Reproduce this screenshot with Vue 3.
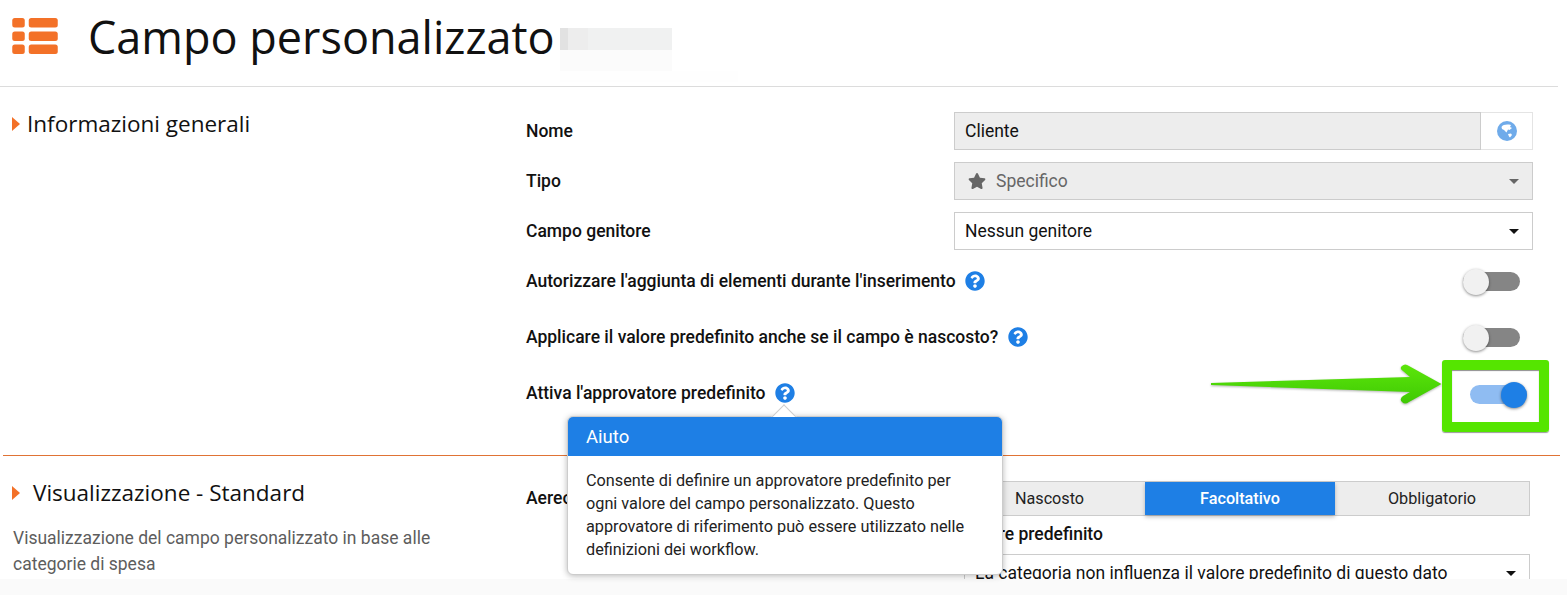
<script setup>
const qPath = "M504 256c0 136.997-111.043 248-248 248S8 392.997 8 256C8 119.083 119.043 8 256 8s248 111.083 248 248zM262.655 90c-54.497 0-89.255 22.957-116.549 63.758-3.536 5.286-2.353 12.415 2.715 16.258l34.699 26.31c5.205 3.947 12.621 3.008 16.665-2.122 17.864-22.658 30.113-35.797 57.303-35.797 20.429 0 45.698 13.148 45.698 32.958 0 14.976-12.363 22.667-32.534 33.976C247.128 238.528 216 254.941 216 296v4c0 6.627 5.373 12 12 12h56c6.627 0 12-5.373 12-12v-1.333c0-28.462 83.186-29.647 83.186-106.667 0-58.002-60.165-102-116.531-102zM256 338c-25.365 0-46 20.635-46 46 0 25.364 20.635 46 46 46s46-20.636 46-46c0-25.365-20.635-46-46-46z";
const starPath = "M259.3 17.8L194 150.2 47.9 171.5c-26.2 3.8-36.7 36.1-17.7 54.6l105.7 103-25 145.5c-4.5 26.3 23.2 46 46.4 33.7L288 439.6l130.7 68.7c23.2 12.2 50.9-7.4 46.4-33.7l-25-145.5 105.7-103c19-18.5 8.5-50.8-17.7-54.6L382 150.2 316.7 17.8c-11.7-23.6-45.6-23.9-57.4 0z";
const toggleRows = [
  { label: "Autorizzare l'aggiunta di elementi durante l'inserimento" },
  { label: "Applicare il valore predefinito anche se il campo è nascosto?" },
];
</script>

<template>
  <div class="page">
    <header class="head">
      <svg class="list-icon" viewBox="0 0 45.5 36" width="46" height="36">
        <g fill="#f37128">
          <rect x="0" y="0" width="12.5" height="9.5" rx="2.5" />
          <rect x="16.5" y="0" width="29" height="9.5" rx="2.5" />
          <rect x="0" y="13.5" width="12.5" height="9.5" rx="2.5" />
          <rect x="16.5" y="13.5" width="29" height="9.5" rx="2.5" />
          <rect x="0" y="26.5" width="12.5" height="9.5" rx="2.5" />
          <rect x="16.5" y="26.5" width="29" height="9.5" rx="2.5" />
        </g>
      </svg>
      <h1 class="title">Campo personalizzato</h1>
      <svg class="smudge" viewBox="0 0 178 54" width="178" height="54">
        <rect x="0" y="0" width="8" height="22" fill="#e2e2e2" />
        <rect x="8" y="0" width="20" height="22" fill="#ededed" />
        <rect x="28" y="0" width="84" height="22" fill="#f0f1f1" />
        <rect x="0" y="22" width="112" height="21" fill="#fbfbfb" />
        <rect x="0" y="43" width="178" height="11" fill="#fefefe" />
      </svg>
    </header>

    <section class="section first">
      <div class="side">
        <h2 class="sec-title small"><span class="tri"></span>Informazioni generali</h2>
      </div>
      <div class="form">
        <div class="row">
          <label class="lab">Nome</label>
          <div class="ctrl">
            <div class="field grey">Cliente</div>
            <div class="addon">
              <svg viewBox="0 0 20 20" width="20" height="20">
                <circle cx="10" cy="10" r="10" fill="#6fabea" />
                <path d="M4.5 6C6 3.5 10 3 14 4L13 6L15 7L12.5 9L11 8.5L9.5 11.5L7 9L5 8Z" fill="#fff" />
                <path d="M11 13L14 12.5L15 14L13 16.5L12 15.5Z" fill="#fff" />
              </svg>
            </div>
          </div>
        </div>
        <div class="row">
          <label class="lab">Tipo</label>
          <div class="ctrl">
            <div class="field grey select muted">
              <svg class="star" viewBox="0 0 576 512" width="18" height="16"><path :d="starPath" fill="#666" /></svg>
              Specifico
              <span class="caret soft"></span>
            </div>
          </div>
        </div>
        <div class="row tight">
          <label class="lab">Campo genitore</label>
          <div class="ctrl">
            <div class="field select">Nessun genitore<span class="caret"></span></div>
          </div>
        </div>
        <div v-for="t in toggleRows" :key="t.label" class="trow">
          <label class="lab">{{ t.label }}
            <svg class="q" viewBox="0 0 512 512" width="20" height="20"><path :d="qPath" fill="#1e7fe5" /></svg>
          </label>
          <span class="sw"><span class="knob"></span></span>
        </div>
        <div class="trow last">
          <label class="lab">Attiva l'approvatore predefinito
            <svg class="q" viewBox="0 0 512 512" width="20" height="20"><path :d="qPath" fill="#1e7fe5" /></svg>
          </label>
          <span class="sw on"><span class="knob"></span></span>
        </div>
      </div>
    </section>

    <section class="section second">
      <div class="side">
        <h2 class="sec-title"><span class="tri wide"></span>Visualizzazione - Standard</h2>
        <p class="desc">Visualizzazione del campo personalizzato in base alle categorie di spesa</p>
      </div>
      <div class="vis">
        <label class="lab aereo">Aereo</label>
        <div class="vis-right">
          <div class="seg">
            <span class="seg-item">Nascosto</span>
            <span class="seg-item active">Facoltativo</span>
            <span class="seg-item end">Obbligatorio</span>
          </div>
          <div class="def">
            <label class="lab">Valore predefinito</label>
            <div class="field select defsel">La categoria non influenza il valore predefinito di questo dato<span class="caret"></span></div>
          </div>
        </div>
      </div>
    </section>

    <div class="footer-band"></div>

    <div class="pop">
      <span class="pop-arrow"></span>
      <div class="pop-head">Aiuto</div>
      <div class="pop-body">Consente di definire un approvatore predefinito per ogni valore del campo personalizzato. Questo approvatore di riferimento può essere utilizzato nelle definizioni dei workflow.</div>
    </div>

    <div class="green-box"></div>
    <svg class="arrow" viewBox="0 0 240 50" width="240" height="50">
      <defs>
        <linearGradient id="ag" x1="0" y1="0" x2="0" y2="1">
          <stop offset="0" stop-color="#5ce60a" />
          <stop offset="1" stop-color="#3fc904" />
        </linearGradient>
      </defs>
      <path d="M1 23L200 17L193 11Q189 8 192 6Q195 3 199 6L231.5 24L199 42Q195 45 192 42Q189 39 193 36L200 32L1 25Z" fill="url(#ag)" />
    </svg>
  </div>
</template>

<style>
html, body { margin: 0; background: #fff; }
</style>

<style scoped>
.page {
  position: relative;
  width: 1567px;
  height: 595px;
  overflow: hidden;
  background: #fff;
  font-family: Roboto, sans-serif;
  color: #111;
}
.head {
  box-sizing: border-box;
  height: 87px;
  width: 1558px;
  border-bottom: 1px solid #dcdcdc;
  display: flex;
  align-items: flex-start;
  padding-left: 12px;
}
.list-icon { margin-top: 18px; }
.title {
  margin: 7px 0 0 30px;
  font: 400 45px/60px "Open Sans", sans-serif;
  color: #111;
}
.smudge { margin: 28px 0 0 5px; }
.section {
  display: flex;
  box-sizing: border-box;
  width: 1557px;
  margin-left: 3px;
}
.first {
  height: 369px;
  border-bottom: 1px solid #e07335;
  padding-top: 25px;
}
.second { padding-top: 21px; }
.side { width: 523px; padding-left: 9px; box-sizing: border-box; }
.sec-title {
  margin: 0;
  font: 400 22.5px/32px "Open Sans", sans-serif;
  color: #111;
  display: flex;
  align-items: center;
}
.sec-title.small { margin-top: -4px; }
.tri {
  width: 0;
  height: 0;
  border-left: 8px solid #f37128;
  border-top: 7px solid transparent;
  border-bottom: 7px solid transparent;
  margin-right: 7px;
}
.tri.wide { margin-right: 13px; }
.desc {
  margin: 16px 0 0 1px;
  width: 440px;
  font-size: 17.5px;
  line-height: 26px;
  color: #5d5d5d;
}
.form { flex: 1; padding-right: 27px; }
.row {
  display: flex;
  align-items: center;
  height: 38px;
  margin-bottom: 12px;
}
.row.tight { margin-bottom: 3px; }
.lab {
  font-size: 17.5px;
  font-weight: 500;
  color: #111;
  display: flex;
  align-items: center;
  white-space: pre-wrap;
}
.row .lab { width: 428px; }
.ctrl { flex: 1; display: flex; }
.field {
  box-sizing: border-box;
  height: 38px;
  flex: 1;
  border: 1px solid #ccc;
  padding: 0 10px;
  font-size: 17.5px;
  line-height: 36px;
  position: relative;
  display: flex;
  align-items: center;
}
.grey { background: #ededed; }
.muted { color: #666; }
.star { margin: 0 10px 0 3px; }
.addon {
  box-sizing: border-box;
  width: 52px;
  height: 38px;
  border: 1px solid #e4e4e4;
  border-left: 0;
  display: flex;
  align-items: center;
  justify-content: center;
}
.caret {
  position: absolute;
  right: 13px;
  top: 16px;
  border-top: 5px solid #111;
  border-left: 5px solid transparent;
  border-right: 5px solid transparent;
}
.caret.soft { border-top-color: #666; }
.trow {
  display: flex;
  align-items: center;
  justify-content: space-between;
  height: 56px;
  padding-right: 13px;
}
.q { margin-left: 5px; }
.sw {
  position: relative;
  display: block;
  width: 57px;
  height: 19px;
  border-radius: 10px;
  background: #858585;
}
.knob {
  position: absolute;
  left: 0;
  top: -3px;
  width: 26px;
  height: 26px;
  border-radius: 50%;
  background: #f1f1f1;
  box-shadow: 0 1px 3px rgba(0, 0, 0, 0.45);
}
.sw.on { background: #8fbcf2; left: 7px; top: 1px; }
.sw.on .knob { left: auto; right: 0; background: #1e7fe5; }
.vis { flex: 1; display: flex; }
.aereo { width: 427px; height: 42px; align-self: flex-start; align-items: center; }
.vis-right { width: 577px; }
.seg {
  box-sizing: border-box;
  display: flex;
  height: 35px;
  margin-top: 4px;
  border: 1px solid #ccc;
  background: #ededed;
}
.seg-item {
  flex: 1;
  text-align: center;
  font-size: 16.2px;
  line-height: 33px;
  color: #222;
}
.seg-item.active {
  flex: none;
  width: 190px;
  background: #1e7fe5;
  color: #fff;
  font-weight: 500;
  box-shadow: 0 2px 4px rgba(0, 0, 0, 0.25);
}
.seg-item.end { flex: none; width: 194px; }
.def { margin: 4px 0 0 11px; }
.def .lab { height: 28px; }
.defsel { margin-top: 6px; height: 38px; }
.footer-band {
  position: absolute;
  left: 0;
  right: 0;
  top: 579px;
  height: 16px;
  background: #fafafa;
}
.pop {
  position: absolute;
  left: 567px;
  top: 416px;
  box-sizing: border-box;
  width: 436px;
  height: 159px;
  background: #fff;
  border: 1px solid #ccc;
  border-radius: 6px;
  box-shadow: 0 1px 6px rgba(0, 0, 0, 0.28);
}
.pop-arrow {
  position: absolute;
  left: 207px;
  top: -9px;
  width: 17px;
  height: 17px;
  background: #fff;
  border-left: 1px solid #ccc;
  border-top: 1px solid #ccc;
  transform: rotate(45deg);
}
.pop-head {
  position: relative;
  height: 39px;
  background: #1e7fe5;
  color: #fff;
  font-size: 18.5px;
  line-height: 41px;
  padding-left: 18px;
  border-radius: 5px 5px 0 0;
}
.pop-body {
  padding: 13px 31px 12px 18px;
  font-size: 16.25px;
  line-height: 23px;
  color: #222;
}
.green-box {
  position: absolute;
  left: 1442px;
  top: 360px;
  box-sizing: border-box;
  width: 107px;
  height: 72px;
  border: 10px solid #55e500;
  border-radius: 3px;
  box-shadow: 0 1px 1px rgba(0, 0, 0, 0.4), inset 0 1px 1px rgba(0, 0, 0, 0.45);
}
.arrow {
  position: absolute;
  left: 1210px;
  top: 360px;
  filter: drop-shadow(0 1px 1px rgba(0, 0, 0, 0.3));
}
</style>
